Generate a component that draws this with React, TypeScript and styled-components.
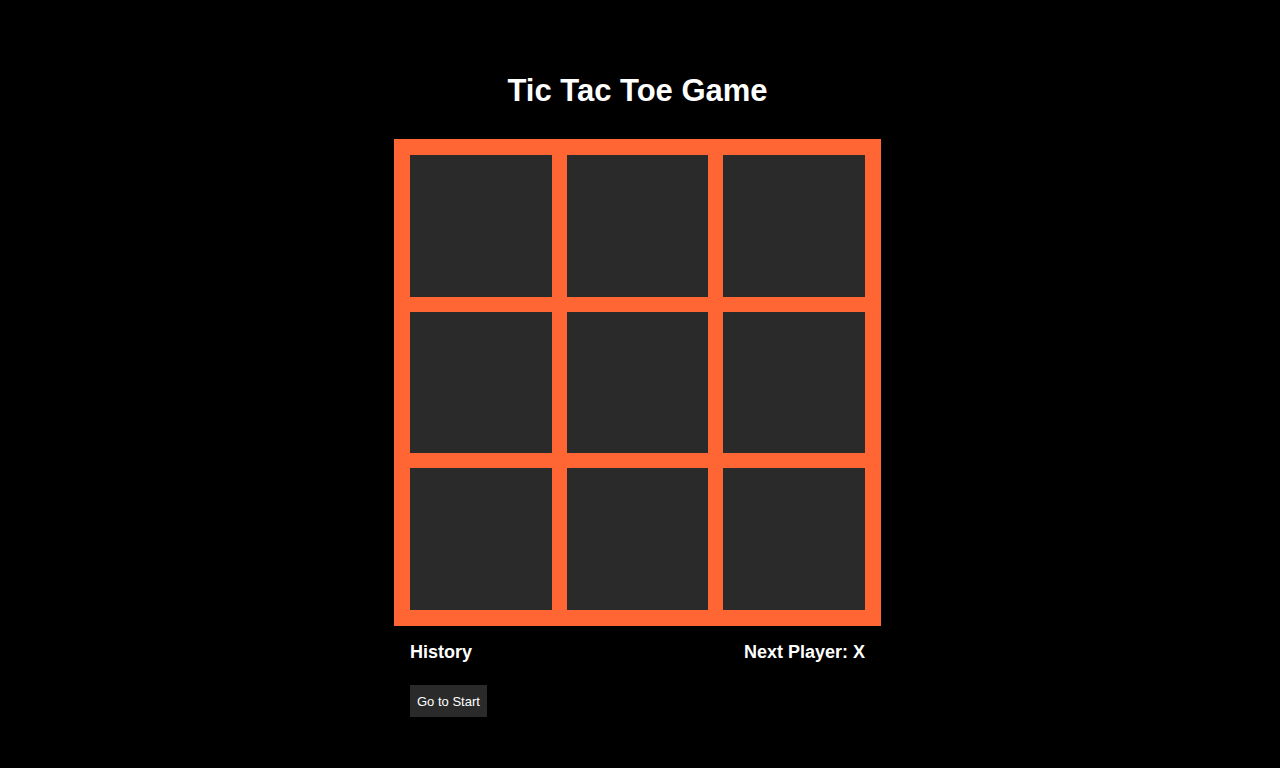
import React from 'react';
import styled, { createGlobalStyle } from 'styled-components';

const GlobalStyle = createGlobalStyle`
  html, body {
    margin: 0;
    padding: 0;
    background: #000;
    font-family: "Liberation Sans", Arial, sans-serif;
    color: #fff;
  }
`;

const Page = styled.main`
  min-height: 768px;
  display: flex;
  flex-direction: column;
  align-items: center;
  padding-top: 71px;
  box-sizing: border-box;
  padding-right: 5px;
`;

const Title = styled.h1`
  margin: 0 0 28px;
  font-size: 31px;
  line-height: 40px;
  font-weight: 700;
`;

const Board = styled.div`
  width: 487px;
  height: 487px;
  box-sizing: border-box;
  padding: 16px;
  background: #ff6633;
  display: grid;
  grid-template-columns: repeat(3, 1fr);
  grid-template-rows: repeat(3, 1fr);
  gap: 15px;
`;

const Cell = styled.button`
  border: none;
  padding: 0;
  background: #2a2a2a;
  color: #fff;
  font-size: 64px;
  font-weight: 700;
  cursor: pointer;
`;

const Footer = styled.div`
  width: 487px;
  box-sizing: border-box;
  padding: 15px 16px 0;
  display: flex;
  justify-content: space-between;
`;

const History = styled.div`
  display: flex;
  flex-direction: column;
  align-items: flex-start;
  gap: 22px;
`;

const Heading = styled.h3`
  margin: 0;
  font-size: 18px;
  line-height: 22px;
  font-weight: 700;
`;

const MoveButton = styled.button`
  border: none;
  background: #2a2a2a;
  color: #fff;
  font-family: "Liberation Sans", Arial, sans-serif;
  font-size: 13px;
  height: 32px;
  padding: 0 7px;
  cursor: pointer;
`;

export default function App() {
  const squares = Array(9).fill(null);
  return (
    <>
      <GlobalStyle />
      <Page>
        <Title>Tic Tac Toe Game</Title>
        <Board>
          {squares.map((s, i) => (
            <Cell key={i}>{s}</Cell>
          ))}
        </Board>
        <Footer>
          <History>
            <Heading>History</Heading>
            <MoveButton>Go to Start</MoveButton>
          </History>
          <Heading>Next Player: X</Heading>
        </Footer>
      </Page>
    </>
  );
}
